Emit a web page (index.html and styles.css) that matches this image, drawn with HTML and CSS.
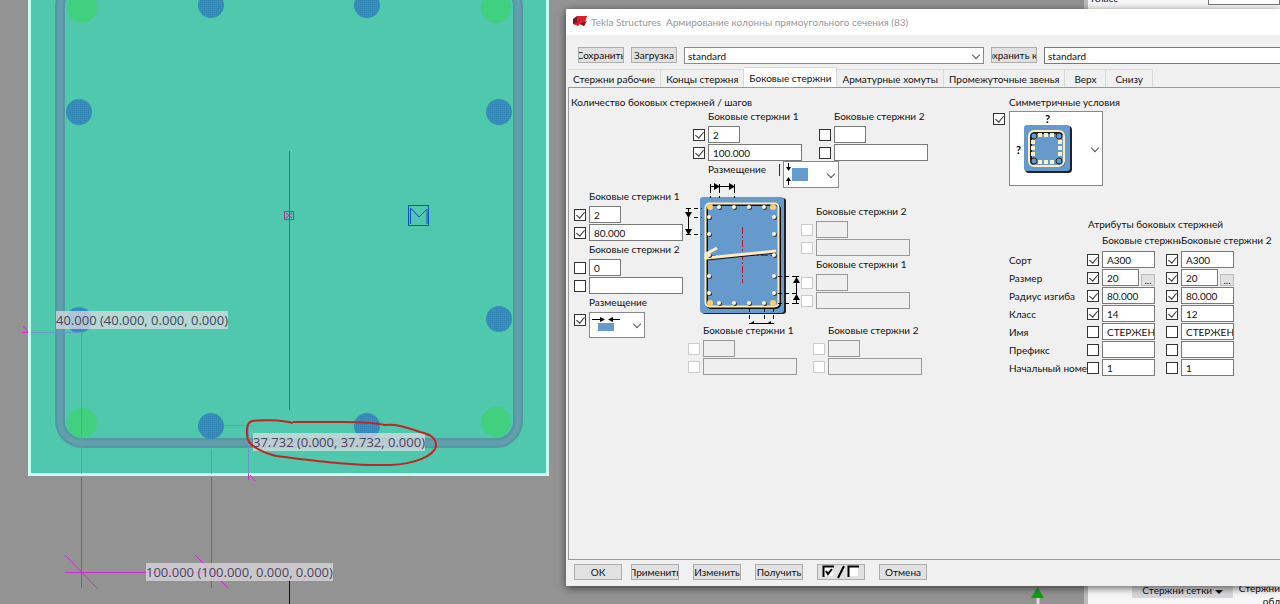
FILE: index.html
```html
<!DOCTYPE html>
<html lang="ru">
<head>
  <meta charset="UTF-8">
  <title>Tekla Structures</title>
  <link rel="stylesheet" href="styles.css">
</head>
<body>

<div class="desktop">

  <!-- model view: column section -->
  <svg class="model" aria-hidden="true">
    <defs>
      <pattern id="mesh" width="2" height="2" patternUnits="userSpaceOnUse">
        <rect width="2" height="2" fill="#3a8cc2"/>
        <rect width="1" height="1" fill="#2f84b4"/>
      </pattern>
    </defs>
    <path d="M29.500 -5V474.500H547.500V-5" fill="#4fc8ad" stroke="#c6fff2" stroke-width="3"/>
    <g fill="none">
      <rect x="60" y="-16" width="458" height="459" rx="22" stroke="#5598a3" stroke-width="10"/>
      <rect x="60" y="-16" width="458" height="459" rx="22" stroke="#629fad" stroke-width="5"/>
    </g>
    <g fill="#40d080">
      <circle cx="82" cy="8" r="15"/><circle cx="496" cy="8" r="15"/>
      <circle cx="82" cy="423" r="15"/><circle cx="496" cy="422" r="15"/>
    </g>
    <g fill="url(#mesh)">
      <circle cx="211" cy="5" r="13"/><circle cx="367" cy="5" r="13"/>
      <circle cx="79" cy="112" r="13"/><circle cx="499" cy="112" r="13"/>
      <circle cx="79" cy="320" r="13"/><circle cx="499" cy="319" r="13"/>
      <circle cx="211" cy="426" r="13"/><circle cx="367" cy="426" r="13"/>
    </g>
    <path d="M289.500 151V410" stroke="#20856f"/>
    <path d="M289.500 580V640" stroke="#111"/>
    <g fill="none" stroke="#b030a8">
      <rect x="284.500" y="211.500" width="9" height="8"/>
      <path d="M286 213l6 5M292 213l-6 5"/>
    </g>
    <g fill="none" stroke="#0c4fc0">
      <rect x="408.500" y="205.500" width="20" height="20"/>
      <path d="M410.500 224V208L419 217L427 209V224"/>
    </g>
    <!-- dimension lines -->
    <g fill="none" stroke="#6698c4">
      <path d="M31 332.500H81.500V474M211.500 449V474M224 425.500H253M248.500 425V474"/>
    </g>
    <g fill="none" stroke="#cc2ccc">
      <path d="M81.500 477V588M211.500 477V588M65 572.500H220M65 555L98 589M195 555L228 588"/>
      <path d="M22 332.500H28M23 326L28 332M248.500 474V480M250 475L255 481"/>
    </g>
  </svg>
  <span class="dim dim-left">40.000 (40.000, 0.000, 0.000)</span>
  <span class="dim dim-mid">37.732 (0.000, 37.732, 0.000)</span>
  <span class="dim dim-low">100.000 (100.000, 0.000, 0.000)</span>
  <svg class="model" aria-hidden="true">
    <path d="M293 423C283 420 256 419 250 422C246 425 246 437 249 442C255 449 264 453 276 456C310 460 350 466 390 465C415 464 434 456 436 446C436 436 428 434 420 432C406 427 396 424 385 425C370 421 345 422 327 422H293" fill="none" stroke="#c02426" stroke-width="2"/>
    <path d="M1037.500 587L1044 598H1031Z" fill="#12a012"/>
    <path d="M1038 598V620" stroke="#ddd" stroke-width="3"/>
  </svg>

  <!-- properties pane behind the dialog -->
  <div class="pane">
    <div class="pane-top"><label for="pane-class">Класс</label><input id="pane-class" type="text"></div>
    <div class="pane-bottom"><button type="button">Стержни сетки <i class="caret"></i></button><span>Стержни<br>обл</span></div>
  </div>

  <div class="dialog">
    <div class="titlebar">
      <svg width="14" height="12" viewBox="0 0 14 12" aria-hidden="true"><path d="M4 0H14L11 10L7 8L5 10L0 8V3L4 2Z" fill="#d9202c"/><path d="M4 0V6L0 8V3ZM7 8L14 5L11 10Z" fill="#7d1420"/></svg>
      <span>Tekla Structures&nbsp; Армирование колонны прямоугольного сечения (83)</span>
    </div>

    <div class="toolbar">
      <button type="button" class="btn">Сохранить</button>
      <button type="button" class="btn">Загрузка</button>
      <span class="combo combo-file"><select aria-label="Файл"><option>standard</option></select></span>
      <button type="button" class="btn">Сохранить как</button>
      <input class="save-name" type="text" value="standard" aria-label="Имя файла">
    </div>

    <div class="tabs">
      <button type="button">Стержни рабочие</button>
      <button type="button">Концы стержня</button>
      <button type="button" class="active">Боковые стержни</button>
      <button type="button">Арматурные хомуты</button>
      <button type="button">Промежуточные звенья</button>
      <button type="button" class="wide">Верх</button>
      <button type="button" class="wide">Снизу</button>
    </div>

    <div class="panel">
      <section class="bars">
        <h2>Количество боковых стержней / шагов</h2>

        <div class="top-groups">
          <div class="group">
            <label for="t1n">Боковые стержни 1</label>
            <input type="checkbox" checked aria-label="Число"><input id="t1n" class="short" type="text" value="2">
            <input type="checkbox" checked aria-label="Шаг"><input type="text" value="100.000" aria-label="Шаг">
          </div>
          <div class="group">
            <label for="t2n">Боковые стержни 2</label>
            <input type="checkbox" aria-label="Число"><input id="t2n" class="short" type="text">
            <input type="checkbox" aria-label="Шаг"><input type="text" aria-label="Шаг">
          </div>
        </div>
        <div class="placing-top">
          <label for="place-top">Размещение</label>
          <span class="sep"></span>
          <span class="combo combo-icon">
            <select id="place-top"><option></option></select>
            <svg width="34" height="26" viewBox="0 0 34 26" aria-hidden="true"><path d="M9 7h16v13H9z" fill="#6699cc"/><path d="M5.500 2v6M5.500 18v6" stroke="#000"/><path d="M3 6h5l-2.500 4zM3 20h5l-2.500-4z"/></svg>
          </span>
        </div>

        <div class="middle">
          <div class="left-groups">
            <div class="group">
              <label for="l1n">Боковые стержни 1</label>
              <input type="checkbox" checked aria-label="Число"><input id="l1n" class="short" type="text" value="2">
              <input type="checkbox" checked aria-label="Шаг"><input type="text" value="80.000" aria-label="Шаг">
            </div>
            <div class="group">
              <label for="l2n">Боковые стержни 2</label>
              <input type="checkbox" aria-label="Число"><input id="l2n" class="short" type="text" value="0">
              <input type="checkbox" aria-label="Шаг"><input type="text" aria-label="Шаг">
            </div>
            <div class="group placing-left">
              <label for="place-left">Размещение</label>
              <input type="checkbox" checked aria-label="Размещение">
              <span class="combo combo-icon">
                <select id="place-left"><option></option></select>
                <svg width="34" height="26" viewBox="0 0 34 26" aria-hidden="true"><path d="M9 11h16v8H9z" fill="#6699cc"/><path d="M3 7.500h9M20 7.500h11" stroke="#000"/><path d="M11 5v5l5-2.500zM24 5v5l-5-2.500z"/></svg>
              </span>
            </div>
          </div>

          <div class="center">
            <div class="figure">
              <svg class="section" width="116" height="144" viewBox="684 182 116 144" aria-hidden="true">
                <rect x="701" y="198" width="84" height="116" rx="3" fill="#222"/>
                <rect x="699" y="197" width="84" height="116" rx="3" fill="#6699cc"/>
                <rect x="706" y="205" width="73" height="103" rx="4" fill="none" stroke="#111" stroke-width="2"/>
                <rect x="704.500" y="203.500" width="73" height="103" rx="4" fill="none" stroke="#ffe9ae" stroke-width="2"/>
                <path d="M741.500 227V283" stroke="#d01020" stroke-dasharray="7 2 2 2"/>
                <path d="M708 255.500H773" stroke="#d01020" stroke-dasharray="7 2 2 2"/>
                <path d="M706 259.500L775 252.500" fill="none" stroke="#111" stroke-width="2"/>
                <path d="M716 248L705 254V258L775 251" fill="none" stroke="#ffe9c0" stroke-width="3"/>
                <g fill="#333"><circle cx="719" cy="208" r="2"/><circle cx="734" cy="208" r="2"/><circle cx="749" cy="208" r="2"/><circle cx="764" cy="208" r="2"/><circle cx="719" cy="304" r="2"/><circle cx="734" cy="304" r="2"/><circle cx="749" cy="304" r="2"/><circle cx="764" cy="304" r="2"/><circle cx="709" cy="218" r="2"/><circle cx="709" cy="235" r="2"/><circle cx="709" cy="256" r="2"/><circle cx="709" cy="277" r="2"/><circle cx="709" cy="294" r="2"/><circle cx="774" cy="218" r="2"/><circle cx="774" cy="235" r="2"/><circle cx="774" cy="256" r="2"/><circle cx="774" cy="277" r="2"/><circle cx="774" cy="294" r="2"/></g>
                <g fill="#fff2d0"><circle cx="718" cy="207" r="2"/><circle cx="733" cy="207" r="2"/><circle cx="748" cy="207" r="2"/><circle cx="763" cy="207" r="2"/><circle cx="718" cy="303" r="2"/><circle cx="733" cy="303" r="2"/><circle cx="748" cy="303" r="2"/><circle cx="763" cy="303" r="2"/><circle cx="708" cy="217" r="2"/><circle cx="708" cy="234" r="2"/><circle cx="708" cy="255" r="2"/><circle cx="708" cy="276" r="2"/><circle cx="708" cy="293" r="2"/><circle cx="773" cy="217" r="2"/><circle cx="773" cy="234" r="2"/><circle cx="773" cy="255" r="2"/><circle cx="773" cy="276" r="2"/><circle cx="773" cy="293" r="2"/></g>
                <g fill="#ffce73"><circle cx="709" cy="207" r="3"/><circle cx="772" cy="207" r="3"/><circle cx="709" cy="303" r="3"/><circle cx="772" cy="303" r="3"/></g>
                <g fill="none" stroke="#000">
                  <path d="M709.500 189v9M718.500 189v9M733.500 189v9M693 208.500h8M693 217.500h8M693 234.500h8M777 276.500h18M777 293.500h18M777 303.500h18M748.500 308v14M763.500 308v14M772.500 308v14" stroke-dasharray="4 3"/>
                  <path d="M709 186.500H734M709.500 184v5M718.500 184v5M733.500 184v5M687.500 208V235M685 208.500h5M685 234.500h5M795.500 276V304M793 276.500h5M793 303.500h5M748 323.500H773"/>
                </g>
                <path d="M713 183v7l6-3.500zM728 183v7l6-3.500zM684 212h7l-3.500 6zM684 229h7l-3.500 6zM792 283h7l-3.500-6zM792 300h7l-3.500-6zM748 324l5-3v3zM765 324l5-3v3z"/>
              </svg>
              <div class="right-groups">
                <div class="group">
                  <label for="r2n">Боковые стержни 2</label>
                  <input type="checkbox" disabled aria-label="Число"><input id="r2n" class="short" type="text" disabled>
                  <input type="checkbox" disabled aria-label="Шаг"><input type="text" disabled aria-label="Шаг">
                </div>
                <div class="group">
                  <label for="r1n">Боковые стержни 1</label>
                  <input type="checkbox" disabled aria-label="Число"><input id="r1n" class="short" type="text" disabled>
                  <input type="checkbox" disabled aria-label="Шаг"><input type="text" disabled aria-label="Шаг">
                </div>
              </div>
            </div>
            <div class="bottom-groups">
              <div class="group">
                <label for="b1n">Боковые стержни 1</label>
                <input type="checkbox" disabled aria-label="Число"><input id="b1n" class="short" type="text" disabled>
                <input type="checkbox" disabled aria-label="Шаг"><input type="text" disabled aria-label="Шаг">
              </div>
              <div class="group">
                <label for="b2n">Боковые стержни 2</label>
                <input type="checkbox" disabled aria-label="Число"><input id="b2n" class="short" type="text" disabled>
                <input type="checkbox" disabled aria-label="Шаг"><input type="text" disabled aria-label="Шаг">
              </div>
            </div>
          </div>
        </div>
      </section>

      <section class="settings">
        <div class="symmetry">
          <label for="sym">Симметричные условия</label>
          <input type="checkbox" checked aria-label="Симметричные условия">
          <span class="combo combo-big">
            <select id="sym"><option></option></select>
            <svg width="76" height="72" viewBox="0 0 76 72" aria-hidden="true">
              <rect x="16" y="15" width="47" height="47" rx="4" fill="#222"/>
              <rect x="15" y="14" width="46" height="46" rx="3" fill="#6699cc"/>
              <rect x="22" y="22" width="33" height="33" rx="4" fill="none" stroke="#222" stroke-width="2"/>
              <rect x="20" y="20" width="35" height="35" rx="5" fill="none" stroke="#ffecc0" stroke-width="2"/>
              <g fill="#fff0c0"><path d="M29 22h4v4h-4zM35 22h4v4h-4zM41 22h4v4h-4zM29 49h4v4h-4zM35 49h4v4h-4zM41 49h4v4h-4zM22 29h4v4h-4zM22 35h4v4h-4zM22 41h4v4h-4zM49 29h4v4h-4zM49 35h4v4h-4zM49 41h4v4h-4z"/></g>
              <g fill="#6699cc" stroke="#222"><circle cx="25" cy="25" r="3"/><circle cx="50" cy="25" r="3"/><circle cx="25" cy="50" r="3"/><circle cx="50" cy="50" r="3"/></g>
              <text x="36" y="12" class="mark">?</text><text x="7" y="43" class="mark">?</text>
            </svg>
          </span>
        </div>

        <h2 class="attributes-title">Атрибуты боковых стержней</h2>
        <div class="attributes">
          <div class="col-title first">Боковые стержни 1</div>
          <div class="col-title second">Боковые стержни 2</div>

          <label for="a1">Сорт</label>
          <input type="checkbox" checked aria-label="Сорт 1"><input id="a1" type="text" value="A300">
          <input type="checkbox" checked aria-label="Сорт 2"><input type="text" value="A300" aria-label="Сорт 2">

          <label for="a2">Размер</label>
          <input type="checkbox" checked aria-label="Размер 1"><span class="size"><input id="a2" type="text" value="20"><button type="button">...</button></span>
          <input type="checkbox" checked aria-label="Размер 2"><span class="size"><input type="text" value="20" aria-label="Размер 2"><button type="button">...</button></span>

          <label for="a3">Радиус изгиба</label>
          <input type="checkbox" checked aria-label="Радиус 1"><input id="a3" type="text" value="80.000">
          <input type="checkbox" checked aria-label="Радиус 2"><input type="text" value="80.000" aria-label="Радиус 2">

          <label for="a4">Класс</label>
          <input type="checkbox" checked aria-label="Класс 1"><input id="a4" type="text" value="14">
          <input type="checkbox" checked aria-label="Класс 2"><input type="text" value="12" aria-label="Класс 2">

          <label for="a5">Имя</label>
          <input type="checkbox" aria-label="Имя 1"><input id="a5" type="text" value="СТЕРЖЕНЬ">
          <input type="checkbox" aria-label="Имя 2"><input type="text" value="СТЕРЖЕНЬ" aria-label="Имя 2">

          <label for="a6">Префикс</label>
          <input type="checkbox" aria-label="Префикс 1"><input id="a6" type="text">
          <input type="checkbox" aria-label="Префикс 2"><input type="text" aria-label="Префикс 2">

          <label for="a7">Начальный номер</label>
          <input type="checkbox" aria-label="Номер 1"><input id="a7" type="text" value="1">
          <input type="checkbox" aria-label="Номер 2"><input type="text" value="1" aria-label="Номер 2">
        </div>
      </section>
    </div>

    <div class="footer">
      <div class="apply">
        <button type="button" class="btn">ОК</button>
        <button type="button" class="btn">Применить</button>
      </div>
      <button type="button" class="btn">Изменить</button>
      <button type="button" class="btn">Получить</button>
      <button type="button" class="btn" aria-label="Переключить флажки">
        <svg width="38" height="14" viewBox="0 0 38 14" aria-hidden="true"><path d="M2 2h9v9H2zM27 2h9v9h-9z" fill="#fff"/><path d="M1.500 12V1.500H12M26.500 12V1.500H37" fill="none" stroke="#000" stroke-width="2"/><path d="M4 6l2 3l4-5M16 13L22 1" fill="none" stroke="#000" stroke-width="2"/></svg>
      </button>
      <button type="button" class="btn">Отмена</button>
    </div>
  </div>
</div>

</body>
</html>
```
FILE: styles.css
```css
* { box-sizing: border-box; }
body { margin: 0; font: 10px/14px Lato, "Noto Sans", sans-serif; color: #111; }
button, input, select { font: inherit; color: inherit; margin: 0; border-radius: 0; }
h2 { margin: 0; font-size: 10px; font-weight: normal; }

.desktop { position: relative; min-height: 100vh; overflow: hidden; background: #939393; }
.model { position: absolute; left: 0; top: 0; width: 100%; height: 100%; }

.dim { position: absolute; background: rgba(226, 222, 228, 0.7); color: #48465c; font-family: "Open Sans", sans-serif; font-size: 13px; line-height: 18px; font-weight: 500; white-space: nowrap; }
.dim-left { left: 56px; top: 311px; }
.dim-mid { left: 253px; top: 433px; }
.dim-low { left: 146px; top: 563px; }

.pane { position: absolute; left: 1084px; right: 0; top: 0; bottom: 0; border-left: 4px solid #bbb; background: #f7f7f8; display: flex; flex-direction: column; justify-content: space-between; overflow: hidden; }
.pane-top { display: flex; justify-content: space-between; height: 5px; align-items: flex-end; padding-left: 3px; }
.pane-top input { width: 72px; height: 18px; border: 1px solid #777; }
.pane-bottom { display: flex; justify-content: space-between; height: 22px; padding-left: 44px; line-height: 13px; text-align: right; }
.pane-bottom button { width: 101px; height: 16px; border: 0; padding: 0; background: #d8d8dc; white-space: nowrap; }
.caret { display: inline-block; border: 4px solid transparent; border-top-color: #111; border-bottom: 0; }

.dialog { position: absolute; left: 566px; right: 0; top: 9px; bottom: 18px; background: #f0f0f0; display: flex; flex-direction: column; box-shadow: 0 2px 8px rgba(0, 0, 0, 0.6); }
.titlebar { height: 26px; padding-left: 7px; background: #fff; display: flex; align-items: center; gap: 4px; color: #999; white-space: nowrap; }

.btn { width: 48px; height: 16px; padding: 0; border: 1px solid #adadad; background: #e1e1e1; display: flex; justify-content: center; align-items: center; overflow: hidden; white-space: nowrap; }

.toolbar { display: flex; gap: 7px; padding: 12px 0 3px 12px; }
.toolbar .btn { width: 46px; flex: none; }
.toolbar input { flex: 1; height: 17px; border: 1px solid #7a7a7a; border-right: 0; padding: 0 3px; }

.combo { position: relative; display: block; }
.combo select { display: block; width: 100%; height: 100%; appearance: none; background: #fff; border: 1px solid #8a8a8a; padding: 0 3px; }
.combo::after { content: ""; position: absolute; right: 5px; top: 50%; width: 5px; height: 5px; margin-top: -4px; border: solid #555; border-width: 0 1px 1px 0; transform: rotate(45deg); }
.combo svg { position: absolute; left: 0; top: 0; pointer-events: none; }
.combo-file { width: 300px; height: 17px; }
.combo-icon { width: 56px; height: 27px; }
.combo-big { width: 94px; height: 75px; }
.mark { font-size: 11px; font-weight: bold; }

.tabs { display: flex; align-items: flex-end; height: 20px; padding-left: 2px; }
.tabs button { height: 18px; padding: 0 5px; border: 1px solid #d9d9d9; border-width: 1px 1px 0 0; background: #f0f0f0; white-space: nowrap; }
.tabs .active { height: 20px; background: #fff; }
.tabs .wide { padding: 0 9px; }

.panel { flex: 1; display: flex; gap: 82px; margin-left: 2px; padding: 7px 0 0 2px; border: solid #999; border-width: 1px 0 1px 1px; }

input[type="text"] { min-width: 0; background: #fff; outline: 0; }
.group input[type="text"], .attributes input[type="text"] { width: 100%; height: 17px; padding: 0 0 0 4px; border: 1px solid #7a7a7a; }
.group input.short { width: 32px; }
input[type="checkbox"] { appearance: none; position: relative; width: 12px; height: 12px; border: 1px solid #333; background: #fff; }
input[type="checkbox"]:checked::after { content: ""; position: absolute; left: 3px; top: 0; width: 4px; height: 7px; border: solid #333; border-width: 0 1px 1px 0; transform: rotate(40deg); }
input[type="checkbox"]:disabled { border-color: #ccc; }
.group input[type="text"]:disabled { background: #efefef; border-color: #999; }

.group { display: grid; grid-template-columns: 12px 94px; column-gap: 3px; row-gap: 1px; align-items: center; width: 109px; }
.group label { grid-column: 2; height: 17px; line-height: 17px; white-space: nowrap; }

.bars { flex: none; width: 352px; }
.top-groups { display: flex; gap: 17px; padding-left: 122px; margin-top: -1px; }
.placing-top { display: flex; padding-left: 137px; }
.placing-top label { width: 71px; line-height: 16px; }
.sep { width: 1px; height: 12px; margin: 3px 3px 0 0; background: #333; }

.middle { display: flex; padding-left: 3px; }
.left-groups { width: 111px; }
.left-groups .combo-icon { height: 26px; }
.placing-left input { align-self: start; margin-top: 2px; }
.center { flex: none; }
.figure { display: flex; }
.section { display: block; margin: -6px 0 -4px; }
.right-groups { padding-top: 15px; }
.bottom-groups { display: flex; gap: 16px; padding-left: 3px; }

.settings { flex: none; width: 270px; }
.symmetry { display: grid; grid-template-columns: 12px 94px; column-gap: 4px; row-gap: 2px; margin-left: -12px; }
.symmetry label { grid-column: 2; white-space: nowrap; }
.symmetry input { margin-top: 2px; }
.attributes-title { padding: 31px 0 0 83px; }
.attributes { display: grid; grid-template-columns: 78px 15px 64px 15px 53px; row-gap: 1px; align-items: center; padding-left: 4px; }
.attributes label { overflow: hidden; white-space: nowrap; }
.attributes input[type="text"] { width: 53px; }
.col-title { white-space: nowrap; overflow: hidden; line-height: 19px; }
.first { grid-column: 3 / 5; }
.second { grid-column: 5; overflow: visible; }
.size { display: flex; align-items: end; gap: 2px; width: 53px; }
.attributes .size input { width: 37px; }
.size button { width: 14px; height: 12px; padding: 0; border: 1px solid #bbb; background: #e1e1e1; line-height: 8px; }

.footer { display: flex; gap: 14px; padding: 4px 0 6px 8px; }
.apply { display: flex; gap: 9px; }
```
